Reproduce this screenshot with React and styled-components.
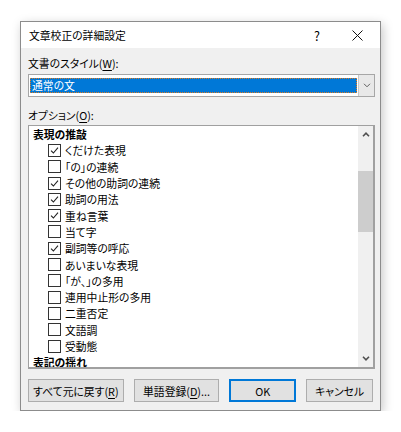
import React from 'react'
import styled, { createGlobalStyle } from 'styled-components'

const GlobalStyle = createGlobalStyle`
  html, body {
    margin: 0;
    padding: 0;
    background: #ffffff;
  }
  body {
    font-family: "Noto Sans CJK JP", "Noto Sans", sans-serif;
    font-feature-settings: "palt";
    color: #000;
  }
`

const options = [
  { label: '表現の推敲', heading: true },
  { label: 'くだけた表現', checked: true },
  { label: '「の」の連続', checked: false },
  { label: 'その他の助詞の連続', checked: true },
  { label: '助詞の用法', checked: true },
  { label: '重ね言葉', checked: true },
  { label: '当て字', checked: false },
  { label: '副詞等の呼応', checked: true },
  { label: 'あいまいな表現', checked: false },
  { label: '「が、」の多用', checked: false },
  { label: '連用中止形の多用', checked: false },
  { label: '二重否定', checked: false },
  { label: '文語調', checked: false },
  { label: '受動態', checked: false },
  { label: '表記の揺れ', heading: true },
]

const Page = styled.div`
  padding: 21px 0 0 20px;
`

const Dialog = styled.div`
  width: 359px;
  height: 388px;
  border: 1px solid #8c8c8c;
  background: #f0f0f0;
  box-shadow: 2px 3px 10px rgba(0, 0, 0, 0.22);
  display: flex;
  flex-direction: column;
`

const TitleBar = styled.div`
  height: 26px;
  background: #ffffff;
  display: flex;
  align-items: center;
  padding: 0 3px 0 8px;
  font-size: 10.8px;
`

const Title = styled.span`
  flex: 1;
`

const TitleButton = styled.span`
  width: 40px;
  display: flex;
  align-items: center;
  justify-content: center;
  font-size: 12.5px;
`

const Body = styled.div`
  flex: 1;
  display: flex;
  flex-direction: column;
  padding: 6px 7px 0 7px;
`

const Label = styled.div`
  font-size: 10.8px;
  line-height: 18px;
  margin-bottom: ${p => p.$gap || 2}px;
  u {
    text-decoration-thickness: 1px;
    text-underline-offset: 2px;
  }
`

const Select = styled.div`
  height: 21px;
  width: 345px;
  border: 1px solid #a6a6a6;
  background: #ffffff;
  display: flex;
  align-items: stretch;
  margin-bottom: 9px;
`

const SelectField = styled.div`
  flex: 1;
  margin: 3px 0 3px 1px;
  background: #0078d7;
  outline: 1px dotted #e07b20;
  outline-offset: -1px;
  color: #ffffff;
  font-size: 10.8px;
  line-height: 15px;
  padding-left: 2px;
`

const DropButton = styled.div`
  width: 15px;
  margin-left: 1px;
  border-left: 1px solid #c8c8c8;
  background: #e8e8e8;
  display: flex;
  align-items: center;
  justify-content: center;
`

const ListBox = styled.div`
  width: 344px;
  height: 241px;
  border: 1px solid #a0a0a0;
  border-right-width: 2px;
  border-bottom-width: 2px;
  background: #ffffff;
  display: flex;
  overflow: hidden;
`

const ListItems = styled.div`
  flex: 1;
  overflow: hidden;
`

const Row = styled.div`
  height: 16.3px;
  display: flex;
  align-items: center;
  font-size: 10.8px;
  white-space: nowrap;
  padding-left: ${p => (p.$heading ? 4 : 19)}px;
  font-weight: ${p => (p.$heading ? 700 : 400)};
`

const Box = styled.span`
  width: 11px;
  height: 11px;
  border: 1px solid #333333;
  background: #ffffff;
  margin-right: 4px;
  display: flex;
  align-items: center;
  justify-content: center;
  flex-shrink: 0;
`

const ScrollBar = styled.div`
  width: 15px;
  background: #f0f0f0;
  display: flex;
  flex-direction: column;
  align-items: center;
`

const ArrowCell = styled.div`
  height: 17px;
  display: flex;
  align-items: center;
  justify-content: center;
`

const Track = styled.div`
  flex: 1;
  width: 100%;
  position: relative;
`

const Thumb = styled.div`
  position: absolute;
  left: 0;
  right: 0;
  background: #cdcdcd;
`

const Buttons = styled.div`
  display: flex;
  gap: 10px;
  margin-top: 10px;
`

const Button = styled.button`
  height: 23px;
  width: ${p => p.$w}px;
  padding: 0;
  background: #e1e1e1;
  border: ${p => (p.$default ? '2px solid #0078d7' : '1px solid #adadad')};
  font-family: inherit;
  font-feature-settings: "palt";
  font-size: 10.8px;
  color: #000;
  u {
    text-decoration-thickness: 1px;
    text-underline-offset: 2px;
  }
`

const Check = () => (
  <svg width="9" height="9" viewBox="0 0 9 9">
    <path d="M1 4.6 L3.4 7 L8 1.6" fill="none" stroke="#222" strokeWidth="1.1" />
  </svg>
)

const Chevron = ({ up }) => (
  <svg width="8" height="5" viewBox="0 0 8 5">
    <path
      d={up ? 'M1 4.2 L4 1.2 L7 4.2' : 'M1 0.8 L4 3.8 L7 0.8'}
      fill="none"
      stroke={up !== undefined ? '#505050' : '#606060'}
      strokeWidth={up !== undefined ? 1.6 : 1}
    />
  </svg>
)

export default function App() {
  const thumbTop = 28
  const thumbHeight = 61

  return (
    <>
      <GlobalStyle />
      <Page>
        <Dialog>
          <TitleBar>
            <Title>文章校正の詳細設定</Title>
            <TitleButton>?</TitleButton>
            <TitleButton>
              <svg width="11" height="11" viewBox="0 0 11 11">
                <path d="M0.5 0.5 L10.5 10.5 M10.5 0.5 L0.5 10.5" stroke="#111" strokeWidth="1" />
              </svg>
            </TitleButton>
          </TitleBar>
          <Body>
            <Label>
              文書のスタイル(<u>W</u>):
            </Label>
            <Select>
              <SelectField>通常の文</SelectField>
              <DropButton>
                <Chevron />
              </DropButton>
            </Select>
            <Label $gap={1}>
              オプション(<u>O</u>):
            </Label>
            <ListBox>
              <ListItems>
                {options.map(o => (
                  <Row key={o.label} $heading={o.heading}>
                    {!o.heading && <Box>{o.checked && <Check />}</Box>}
                    {o.label}
                  </Row>
                ))}
              </ListItems>
              <ScrollBar>
                <ArrowCell>
                  <Chevron up />
                </ArrowCell>
                <Track>
                  <Thumb style={{ top: thumbTop, height: thumbHeight }} />
                </Track>
                <ArrowCell>
                  <Chevron up={false} />
                </ArrowCell>
              </ScrollBar>
            </ListBox>
            <Buttons>
              <Button $w={96}>
                すべて元に戻す(<u>R</u>)
              </Button>
              <Button $w={86}>
                単語登録(<u>D</u>)...
              </Button>
              <Button $w={67} $default>
                OK
              </Button>
              <Button $w={67}>キャンセル</Button>
            </Buttons>
          </Body>
        </Dialog>
      </Page>
    </>
  )
}
